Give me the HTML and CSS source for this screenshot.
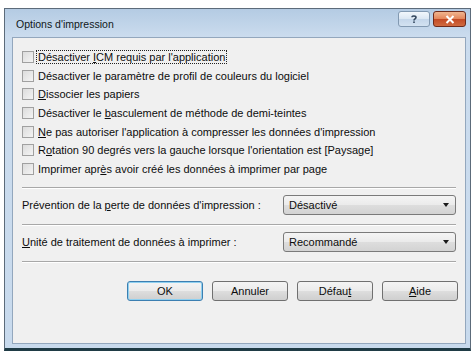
FILE: index.html
```html
<!DOCTYPE html>
<html lang="fr">
<head>
<meta charset="utf-8">
<title>Options d'impression</title>
<link rel="stylesheet" href="styles.css">
</head>
<body>
<div class="window">
  <div class="titlebar">
    <span class="title">Options d'impression</span>
    <div class="caption-buttons">
      <span class="cap-btn help"><svg width="10" height="10" viewBox="0 0 10 10"><path d="M3 3.2 C3 1.6 7 1.6 7 3.4 C7 4.8 5 4.8 5 6.4" fill="none" stroke="#33475e" stroke-width="1.6"/><rect x="4.2" y="7.4" width="1.6" height="1.6" fill="#33475e"/></svg></span>
      <span class="cap-btn close"><svg width="10" height="9" viewBox="0 0 10 9"><path d="M1.5 1 L8.5 8 M8.5 1 L1.5 8" stroke="#fff" stroke-width="2"/></svg></span>
    </div>
  </div>
  <div class="client">
    <ul class="checks">
      <li><span class="box"></span><span class="lbl focus">Désactiver <u>I</u>CM requis par l'application</span></li>
      <li><span class="box"></span><span class="lbl">Désactiver le paramètre de profil de couleurs du logiciel</span></li>
      <li><span class="box"></span><span class="lbl"><u>D</u>issocier les papiers</span></li>
      <li><span class="box"></span><span class="lbl">Désactiver le <u>b</u>asculement de méthode de demi-teintes</span></li>
      <li><span class="box"></span><span class="lbl"><u>N</u>e pas autoriser l'application à compresser les données d'impression</span></li>
      <li><span class="box"></span><span class="lbl">R<u>o</u>tation 90 degrés vers la gauche lorsque l'orientation est [Paysage]</span></li>
      <li><span class="box"></span><span class="lbl">Imprimer apr<u>è</u>s avoir créé les données à imprimer par page</span></li>
    </ul>
    <div class="sep first"></div>
    <div class="field">
      <span class="flbl">Prévention de la <u>p</u>erte de données d'impression :</span>
      <span class="combo"><span>Désactivé</span><span class="arrow"></span></span>
    </div>
    <div class="sep"></div>
    <div class="field">
      <span class="flbl"><u>U</u>nité de traitement de données à imprimer :</span>
      <span class="combo"><span>Recommandé</span><span class="arrow"></span></span>
    </div>
    <div class="sep"></div>
    <div class="buttons">
      <span class="btn default">OK</span>
      <span class="btn">Annuler</span>
      <span class="btn">Défau<u>t</u></span>
      <span class="btn"><u>A</u>ide</span>
    </div>
  </div>
</div>
</body>
</html>
```
FILE: styles.css
```css
html, body {
  margin: 0;
  padding: 0;
  background: #ffffff;
}
body {
  font-family: "Liberation Sans", Arial, sans-serif;
  font-size: 11px;
  color: #0d0d0d;
}
.window {
  box-sizing: border-box;
  margin: 8px 0 0 4px;
  width: 467px;
  height: 343px;
  border: 1px solid #5c6b7a;
  border-bottom: 3px solid #1f3b45;
  background: linear-gradient(to bottom, #b4cbe3 0px, #cbdcee 28px, #c8daed 100%);
  padding: 0 4px 4px 7px;
  display: flex;
  flex-direction: column;
}
.titlebar {
  height: 28px;
  flex: none;
  display: flex;
  align-items: center;
  justify-content: space-between;
}
.title {
  font-size: 10.5px;
  color: #101820;
  padding-left: 4px;
  padding-top: 1px;
}
.caption-buttons {
  display: flex;
  align-self: flex-start;
  margin-top: 2px;
  gap: 3px;
}
.cap-btn {
  height: 14px;
  border-radius: 3px;
  display: flex;
  align-items: center;
  justify-content: center;
}
.help {
  width: 30px;
  border: 1px solid #8299b1;
  background: linear-gradient(to bottom, #f2f7fc 0%, #dbe7f3 50%, #c4d6ea 51%, #d3e2f1 100%);
}
.close {
  width: 31px;
  border: 1px solid #6e2a1a;
  background: linear-gradient(to bottom, #f0b58f 0%, #e4875c 48%, #c34b25 52%, #d06a3f 100%);
}
.client {
  flex: 1;
  background: #f0f0f0;
  border: 1px solid #93a7bd;
  padding: 10px 9px 0 9px;
  display: flex;
  flex-direction: column;
}
.checks {
  list-style: none;
  margin: 0;
  padding: 0;
}
.checks li {
  height: 18.6px;
  display: flex;
  align-items: center;
}
.box {
  width: 10px;
  height: 10px;
  border: 1px solid #a0a0a0;
  background: linear-gradient(135deg, #dcdcdc 0%, #f4f4f4 100%);
  margin-right: 2px;
  flex: none;
}
.lbl {
  padding: 0 1px;
  border: 1px solid transparent;
}
.lbl.focus {
  border: 1px dotted #222;
}
.sep {
  height: 0;
  border-top: 1px solid #a8a8a8;
  border-bottom: 1px solid #ffffff;
  margin: 9px 0 6px;
}
.field {
  display: flex;
  align-items: center;
  justify-content: space-between;
  height: 20px;
}
.combo {
  width: 173px;
  height: 20px;
  box-sizing: border-box;
  border: 1px solid #7a7a7a;
  border-radius: 3px;
  background: linear-gradient(to bottom, #f4f4f4 0%, #ebebeb 48%, #dddddd 52%, #d3d3d3 100%);
  display: flex;
  align-items: center;
  justify-content: space-between;
  padding: 0 6px 0 5px;
}
.arrow {
  width: 0;
  height: 0;
  border-left: 3.5px solid transparent;
  border-right: 3.5px solid transparent;
  border-top: 4px solid #1a1a1a;
}
.buttons {
  display: flex;
  justify-content: flex-end;
  gap: 9px;
  margin-top: 12px;
}
.buttons .btn:last-child {
  margin-right: -2px;
}
.btn {
  width: 76px;
  height: 20px;
  box-sizing: border-box;
  border: 1px solid #707070;
  border-radius: 3px;
  background: linear-gradient(to bottom, #f4f4f4 0%, #ebebeb 48%, #dddddd 52%, #cfcfcf 100%);
  display: flex;
  align-items: center;
  justify-content: center;
}
.btn.default {
  border-color: #3c7fb1;
  box-shadow: inset 0 0 0 1px #8fd0f0;
}
```
